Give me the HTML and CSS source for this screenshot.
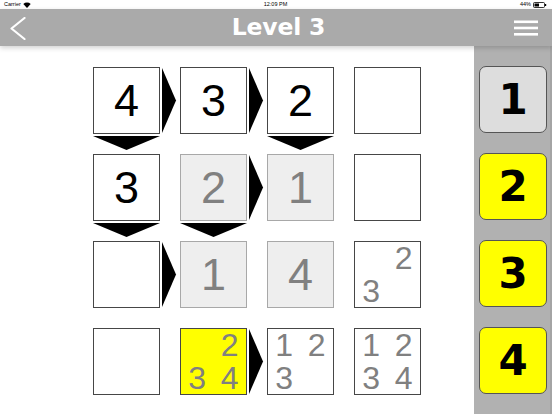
FILE: index.html
```html
<!DOCTYPE html>
<html>
<head>
<meta charset="utf-8">
<link rel="stylesheet" href="styles.css">
</head>
<body>
<div class="status">
  <div class="st-left">Carrier
    <svg class="wifi" width="8" height="6" viewBox="0 0 8 6"><path d="M4 6 L0.3 2 A5.4 5.4 0 0 1 7.7 2 Z" fill="#000"/></svg>
  </div>
  <div class="st-mid">12:09 PM</div>
  <div class="st-right">44%
    <svg class="batt" width="14" height="6" viewBox="0 0 14 6"><rect x="0.5" y="0.5" width="11" height="5" rx="1" fill="none" stroke="#000" stroke-width="0.8"/><rect x="1.5" y="1.5" width="4.5" height="3" fill="#000"/><rect x="12" y="2" width="1.2" height="2" fill="#000"/></svg>
  </div>
</div>
<header class="topbar">
  <div class="tb-left">
    <svg width="16" height="23" viewBox="0 0 16 23"><polyline points="14.5,1 1.5,11.5 14.5,22" fill="none" stroke="#fff" stroke-width="2.2" stroke-linecap="round" stroke-linejoin="round"/></svg>
  </div>
  <h1 class="title">Level 3</h1>
  <div class="tb-right">
    <svg width="24" height="16" viewBox="0 0 24 16"><rect x="0" y="0.5" width="24" height="2.6" fill="#fff"/><rect x="0" y="6.7" width="24" height="2.6" fill="#fff"/><rect x="0" y="13" width="24" height="2.6" fill="#fff"/></svg>
  </div>
</header>
<div class="content">
  <main class="board">
    <div class="grid">
      <!-- row 0 -->
      <div class="cell given">4</div>
      <div class="gap-h"><svg width="20" height="67" viewBox="0 0 20 67"><polygon points="2,1 16,33.5 2,66"/></svg></div>
      <div class="cell given">3</div>
      <div class="gap-h"><svg width="20" height="67" viewBox="0 0 20 67"><polygon points="2,1 16,33.5 2,66"/></svg></div>
      <div class="cell given">2</div>
      <div class="gap-h"></div>
      <div class="cell"></div>
      <!-- gap row 0 -->
      <div class="gap-v"><svg width="67" height="20" viewBox="0 0 67 20"><polygon points="0,2 67,2 33.5,16"/></svg></div>
      <div class="gap-x"></div>
      <div class="gap-v"></div>
      <div class="gap-x"></div>
      <div class="gap-v"><svg width="67" height="20" viewBox="0 0 67 20"><polygon points="0,2 67,2 33.5,16"/></svg></div>
      <div class="gap-x"></div>
      <div class="gap-v"></div>
      <!-- row 1 -->
      <div class="cell given">3</div>
      <div class="gap-h"></div>
      <div class="cell solved">2</div>
      <div class="gap-h"><svg width="20" height="67" viewBox="0 0 20 67"><polygon points="2,1 16,33.5 2,66"/></svg></div>
      <div class="cell solved">1</div>
      <div class="gap-h"></div>
      <div class="cell"></div>
      <!-- gap row 1 -->
      <div class="gap-v"><svg width="67" height="20" viewBox="0 0 67 20"><polygon points="0,2 67,2 33.5,16"/></svg></div>
      <div class="gap-x"></div>
      <div class="gap-v"><svg width="67" height="20" viewBox="0 0 67 20"><polygon points="0,2 67,2 33.5,16"/></svg></div>
      <div class="gap-x"></div>
      <div class="gap-v"></div>
      <div class="gap-x"></div>
      <div class="gap-v"></div>
      <!-- row 2 -->
      <div class="cell"></div>
      <div class="gap-h"><svg width="20" height="67" viewBox="0 0 20 67"><polygon points="2,1 16,33.5 2,66"/></svg></div>
      <div class="cell solved">1</div>
      <div class="gap-h"></div>
      <div class="cell solved">4</div>
      <div class="gap-h"></div>
      <div class="cell notes"><span></span><span>2</span><span>3</span><span></span></div>
      <!-- gap row 2 -->
      <div class="gap-v"></div>
      <div class="gap-x"></div>
      <div class="gap-v"></div>
      <div class="gap-x"></div>
      <div class="gap-v"></div>
      <div class="gap-x"></div>
      <div class="gap-v"></div>
      <!-- row 3 -->
      <div class="cell"></div>
      <div class="gap-h"></div>
      <div class="cell notes selected"><span></span><span>2</span><span>3</span><span>4</span></div>
      <div class="gap-h"><svg width="20" height="67" viewBox="0 0 20 67"><polygon points="2,1 16,33.5 2,66"/></svg></div>
      <div class="cell notes"><span>1</span><span>2</span><span>3</span><span></span></div>
      <div class="gap-h"></div>
      <div class="cell notes"><span>1</span><span>2</span><span>3</span><span>4</span></div>
    </div>
  </main>
  <aside class="side">
    <div class="pick off">1</div>
    <div class="pick">2</div>
    <div class="pick">3</div>
    <div class="pick">4</div>
  </aside>
</div>
</body>
</html>
```

FILE: styles.css
```css
* { box-sizing: border-box; }
html, body {
  margin: 0;
  padding: 0;
  width: 552px;
  height: 414px;
  overflow: hidden;
  background: #fff;
  font-family: "Liberation Sans", Arial, sans-serif;
}
.status {
  height: 9px;
  display: grid;
  grid-template-columns: 1fr auto 1fr;
  align-items: center;
  font-size: 5.5px;
  line-height: 9px;
  color: #000;
  padding: 0 5px 0 4px;
}
.st-left { display: flex; align-items: center; gap: 2px; }
.st-mid { text-align: center; }
.st-right { display: flex; align-items: center; justify-content: flex-end; gap: 2px; }
.topbar {
  height: 37px;
  background: #aaaaaa;
  display: grid;
  grid-template-columns: 1fr auto 1fr;
  align-items: center;
  position: relative;
  z-index: 2;
  box-shadow: 0 2px 5px rgba(0,0,0,0.18);
}
.tb-left { padding-left: 10px; display: flex; align-items: center; padding-top: 1px; }
.tb-right { display: flex; justify-content: flex-end; padding-right: 14px; padding-top: 1px; }
.title {
  margin: 0;
  color: #fff;
  font-family: "DejaVu Sans", sans-serif;
  font-weight: bold;
  font-size: 23.5px;
  letter-spacing: -0.2px;
  line-height: 37px;
  padding-left: 5px;
}
.content {
  display: flex;
  height: 368px;
}
.board {
  flex: 1;
  padding: 21px 0 0 93px;
}
.grid {
  display: grid;
  grid-template-columns: 67px 20px 67px 20px 67px 20px 67px;
  grid-template-rows: 67px 20px 67px 20px 67px 20px 67px;
}
.gap-h svg, .gap-v svg { display: block; }
polygon { fill: #000; }
.cell {
  border: 1.5px solid #464646;
  background: #fff;
  display: flex;
  align-items: center;
  justify-content: center;
  font-size: 45px;
  line-height: 1;
  color: #000;
}
.cell.solved {
  background: #eeeeee;
  border-color: #a8a8a8;
  color: #808080;
}
.cell.notes {
  display: grid;
  grid-template-columns: 1fr 1fr;
  grid-template-rows: 1fr 1fr;
  font-size: 32px;
  color: #808080;
  padding: 0 0 0 0;
}
.cell.notes span {
  display: flex;
  align-items: center;
  justify-content: center;
}
.cell.selected { background: #ffff00; }
.side {
  width: 78px;
  background: #b1b1b1;
  padding: 20px 0 0 5px;
  display: flex;
  flex-direction: column;
  gap: 20px;
  border-right: 2px solid #a4a4a4;
}
.pick {
  width: 68px;
  height: 67px;
  border: 1px solid #555;
  border-radius: 7px;
  background: #ffff00;
  display: flex;
  align-items: center;
  justify-content: center;
  font-family: "DejaVu Sans", sans-serif;
  font-weight: bold;
  font-size: 42px;
  color: #000;
  line-height: 1;
}
.pick.off { background: #dddddd; }
```
